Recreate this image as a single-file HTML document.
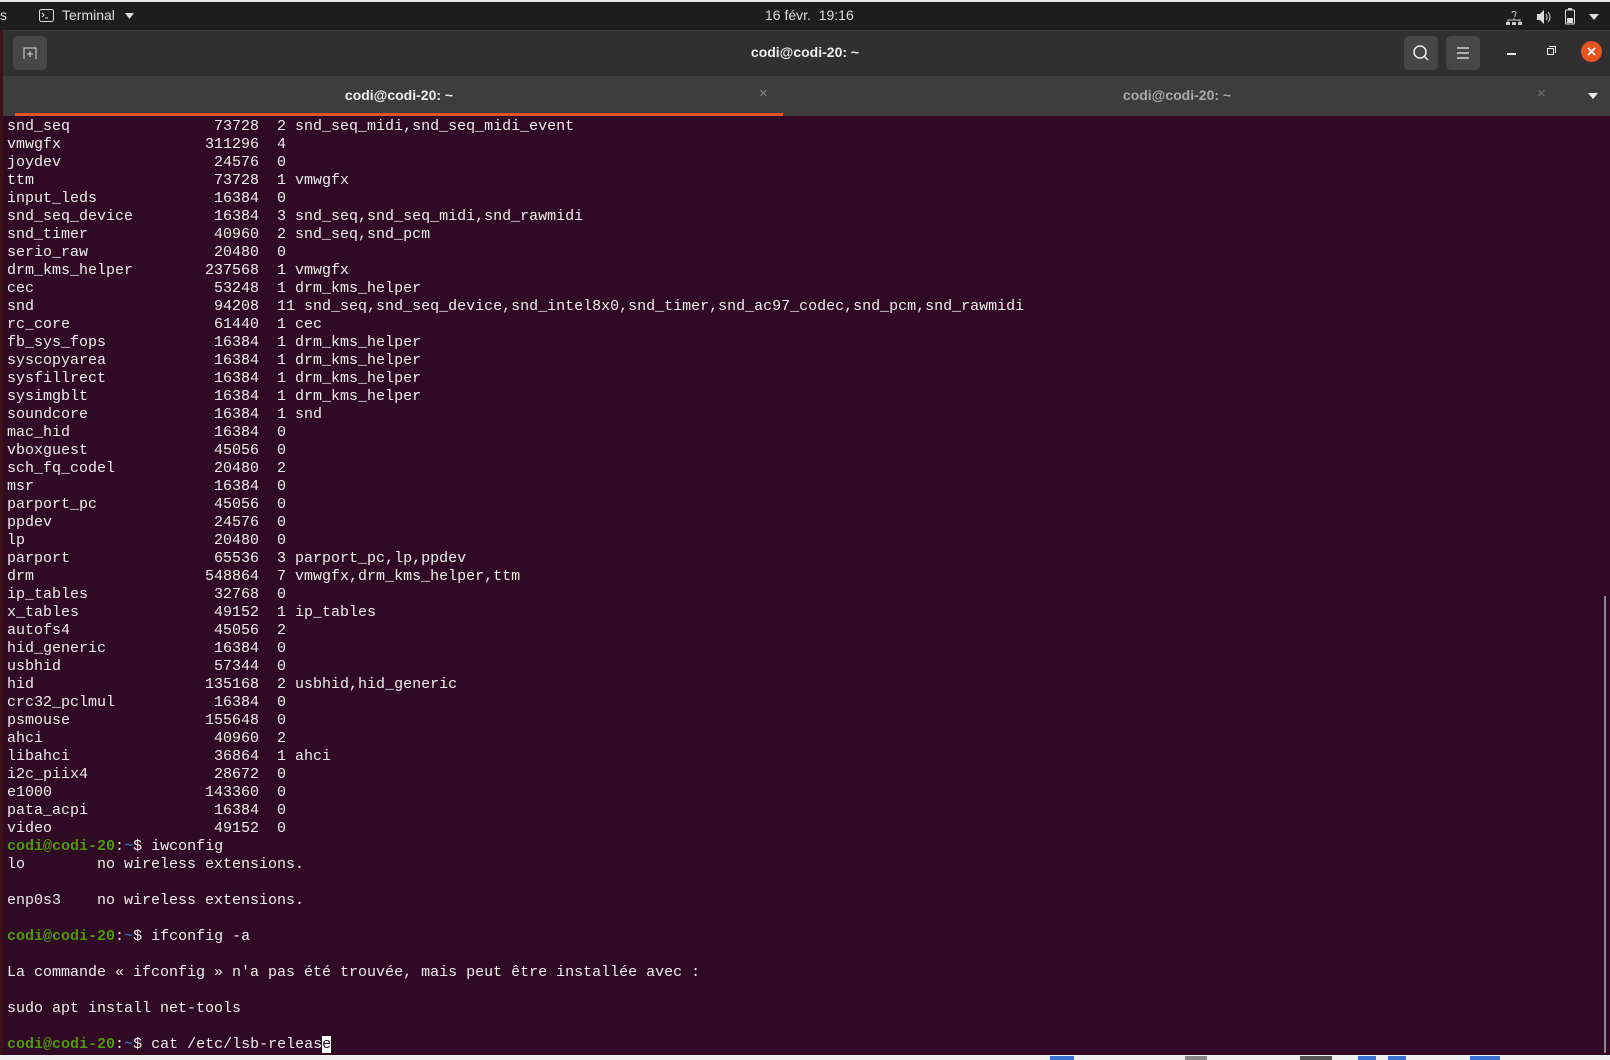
<!DOCTYPE html>
<html><head><meta charset="utf-8"><style>
*{margin:0;padding:0;box-sizing:border-box}
body{width:1610px;height:1060px;overflow:hidden;background:#300a24;position:relative;font-family:"Liberation Sans",sans-serif}
#top{position:absolute;left:0;top:0;width:1610px;height:30px;background:#1d1d1d;border-top:2px solid #e8e8e8;color:#ddd;font-size:14px}
#hdr{position:absolute;left:0;top:30px;width:1610px;height:46px;background:#303030;border-top:1px solid #3a3a3a}
#tabs{position:absolute;left:0;top:76px;width:1610px;height:40px;background:#3d3d3d}
#term{position:absolute;left:7px;top:118px;font-family:"Liberation Mono",monospace;font-size:15px;line-height:18px;color:#eeeeec;white-space:pre}
.g{color:#4e9a06;font-weight:bold}.b{color:#3465a4;font-weight:bold}
.btn{position:absolute;width:34px;height:34px;background:#474747;border-radius:5px;top:5px}
#bot{position:absolute;left:0;top:1055px;width:1610px;height:5px;background:#efefef}
</style></head><body>
<div id="top">
<span style="position:absolute;left:0;top:5px">s</span>
<svg style="position:absolute;left:39px;top:7px" width="15" height="14"><rect x="0.5" y="0.5" width="14" height="12" rx="2" fill="none" stroke="#ddd"/><path d="M3 4l2 2-2 2M6 9h3" stroke="#ddd" fill="none"/></svg>
<span style="position:absolute;left:62px;top:5px">Terminal</span>
<svg style="position:absolute;left:125px;top:11px" width="9" height="6"><path d="M0 0h9L4.5 6z" fill="#ddd"/></svg>
<span style="position:absolute;left:765px;top:5px">16 févr.&nbsp; 19:16</span>
<svg style="position:absolute;left:1506px;top:7px" width="16" height="16"><path d="M6 4a2 2 0 1 1 3 2v2M2 14v-3h12v3M8 9v2" stroke="#ccc" fill="none"/><rect x="0" y="13" width="4" height="3" fill="#ccc"/><rect x="6" y="13" width="4" height="3" fill="#ccc"/><rect x="12" y="13" width="4" height="3" fill="#ccc"/></svg>
<svg style="position:absolute;left:1536px;top:8px" width="16" height="14"><path d="M1 4h3l4-4v14l-4-4H1z" fill="#ddd"/><path d="M10 4q2 3 0 6M12 2q4 5 0 10" stroke="#ddd" fill="none"/></svg>
<svg style="position:absolute;left:1565px;top:6px" width="10" height="17"><rect x="0.5" y="2" width="9" height="14" rx="1" fill="none" stroke="#ddd"/><rect x="3" y="0" width="4" height="2" fill="#ddd"/><rect x="2" y="10" width="6" height="5" fill="#ddd"/></svg>
<svg style="position:absolute;left:1589px;top:12px" width="10" height="6"><path d="M0 0h10L5 6z" fill="#ddd"/></svg>
</div>
<div id="hdr">
<div class="btn" style="left:13px"><svg width="34" height="34"><path d="M11 23V12h12v11M17 15v6M14 18h6" stroke="#ddd" fill="none"/></svg></div>
<div style="position:absolute;left:0;width:1610px;text-align:center;top:13px;color:#eee;font-weight:bold;font-size:14px">codi@codi-20: ~</div>
<div class="btn" style="left:1404px"><svg width="34" height="34"><circle cx="16" cy="16" r="6" stroke="#eee" stroke-width="1.5" fill="none"/><path d="M20 20l4 4" stroke="#eee" stroke-width="1.5"/></svg></div>
<div class="btn" style="left:1446px"><svg width="34" height="34"><path d="M11 12h12M11 17h12M11 22h12" stroke="#eee" stroke-width="1.3"/></svg></div>
<div style="position:absolute;left:1507px;top:22px;width:9px;height:1.5px;background:#eee"></div>
<div style="position:absolute;left:1547px;top:17px;width:7px;height:7px;border:1.5px solid #eee"></div>
<div style="position:absolute;left:1549px;top:15px;width:7px;height:7px;border-top:1.5px solid #eee;border-right:1.5px solid #eee"></div>
<div style="position:absolute;left:1581px;top:10px;width:21px;height:21px;border-radius:50%;background:#e95420"><svg width="21" height="21"><path d="M7 7l7 7M14 7l-7 7" stroke="#fff" stroke-width="1.6"/></svg></div>
</div>
<div id="tabs">
<div style="position:absolute;left:0;width:798px;text-align:center;top:11px;color:#eee;font-weight:bold;font-size:14px">codi@codi-20: ~</div>
<div style="position:absolute;left:759px;top:9px;color:#888;font-size:15px">×</div>
<div style="position:absolute;left:15px;top:37px;width:768px;height:3px;background:#e95420"></div>
<div style="position:absolute;left:799px;width:756px;text-align:center;top:11px;color:#aaa;font-weight:bold;font-size:14px">codi@codi-20: ~</div>
<div style="position:absolute;left:1537px;top:9px;color:#777;font-size:15px">×</div>
<svg style="position:absolute;left:1588px;top:17px" width="10" height="6"><path d="M0 0h10L5 6z" fill="#eee"/></svg>
</div>
<div style="position:absolute;left:0;top:30px;width:3px;height:1030px;background:#3a1218"></div>
<div style="position:absolute;left:1604px;top:596px;width:2px;height:457px;background:#888"></div>
<div id="term">snd_seq                73728  2 snd_seq_midi,snd_seq_midi_event
vmwgfx                311296  4
joydev                 24576  0
ttm                    73728  1 vmwgfx
input_leds             16384  0
snd_seq_device         16384  3 snd_seq,snd_seq_midi,snd_rawmidi
snd_timer              40960  2 snd_seq,snd_pcm
serio_raw              20480  0
drm_kms_helper        237568  1 vmwgfx
cec                    53248  1 drm_kms_helper
snd                    94208  11 snd_seq,snd_seq_device,snd_intel8x0,snd_timer,snd_ac97_codec,snd_pcm,snd_rawmidi
rc_core                61440  1 cec
fb_sys_fops            16384  1 drm_kms_helper
syscopyarea            16384  1 drm_kms_helper
sysfillrect            16384  1 drm_kms_helper
sysimgblt              16384  1 drm_kms_helper
soundcore              16384  1 snd
mac_hid                16384  0
vboxguest              45056  0
sch_fq_codel           20480  2
msr                    16384  0
parport_pc             45056  0
ppdev                  24576  0
lp                     20480  0
parport                65536  3 parport_pc,lp,ppdev
drm                   548864  7 vmwgfx,drm_kms_helper,ttm
ip_tables              32768  0
x_tables               49152  1 ip_tables
autofs4                45056  2
hid_generic            16384  0
usbhid                 57344  0
hid                   135168  2 usbhid,hid_generic
crc32_pclmul           16384  0
psmouse               155648  0
ahci                   40960  2
libahci                36864  1 ahci
i2c_piix4              28672  0
e1000                 143360  0
pata_acpi              16384  0
video                  49152  0
<span class="g">codi@codi-20</span>:<span class="b">~</span>$ iwconfig
lo        no wireless extensions.

enp0s3    no wireless extensions.

<span class="g">codi@codi-20</span>:<span class="b">~</span>$ ifconfig -a

La commande « ifconfig » n'a pas été trouvée, mais peut être installée avec :

sudo apt install net-tools

<span class="g">codi@codi-20</span>:<span class="b">~</span>$ cat /etc/lsb-releas<span style="background:#fff;color:#300a24">e</span></div>
<div id="bot">
<div style="position:absolute;left:1050px;top:1px;width:24px;height:4px;background:#3b74d0"></div>
<div style="position:absolute;left:1185px;top:1px;width:22px;height:4px;background:#888"></div>
<div style="position:absolute;left:1300px;top:1px;width:32px;height:4px;background:#555"></div>
<div style="position:absolute;left:1358px;top:1px;width:18px;height:4px;background:#3b74d0"></div>
<div style="position:absolute;left:1388px;top:1px;width:18px;height:4px;background:#3b74d0"></div>
<div style="position:absolute;left:1470px;top:1px;width:30px;height:4px;background:#3b74d0"></div>
</div>
</body></html>
